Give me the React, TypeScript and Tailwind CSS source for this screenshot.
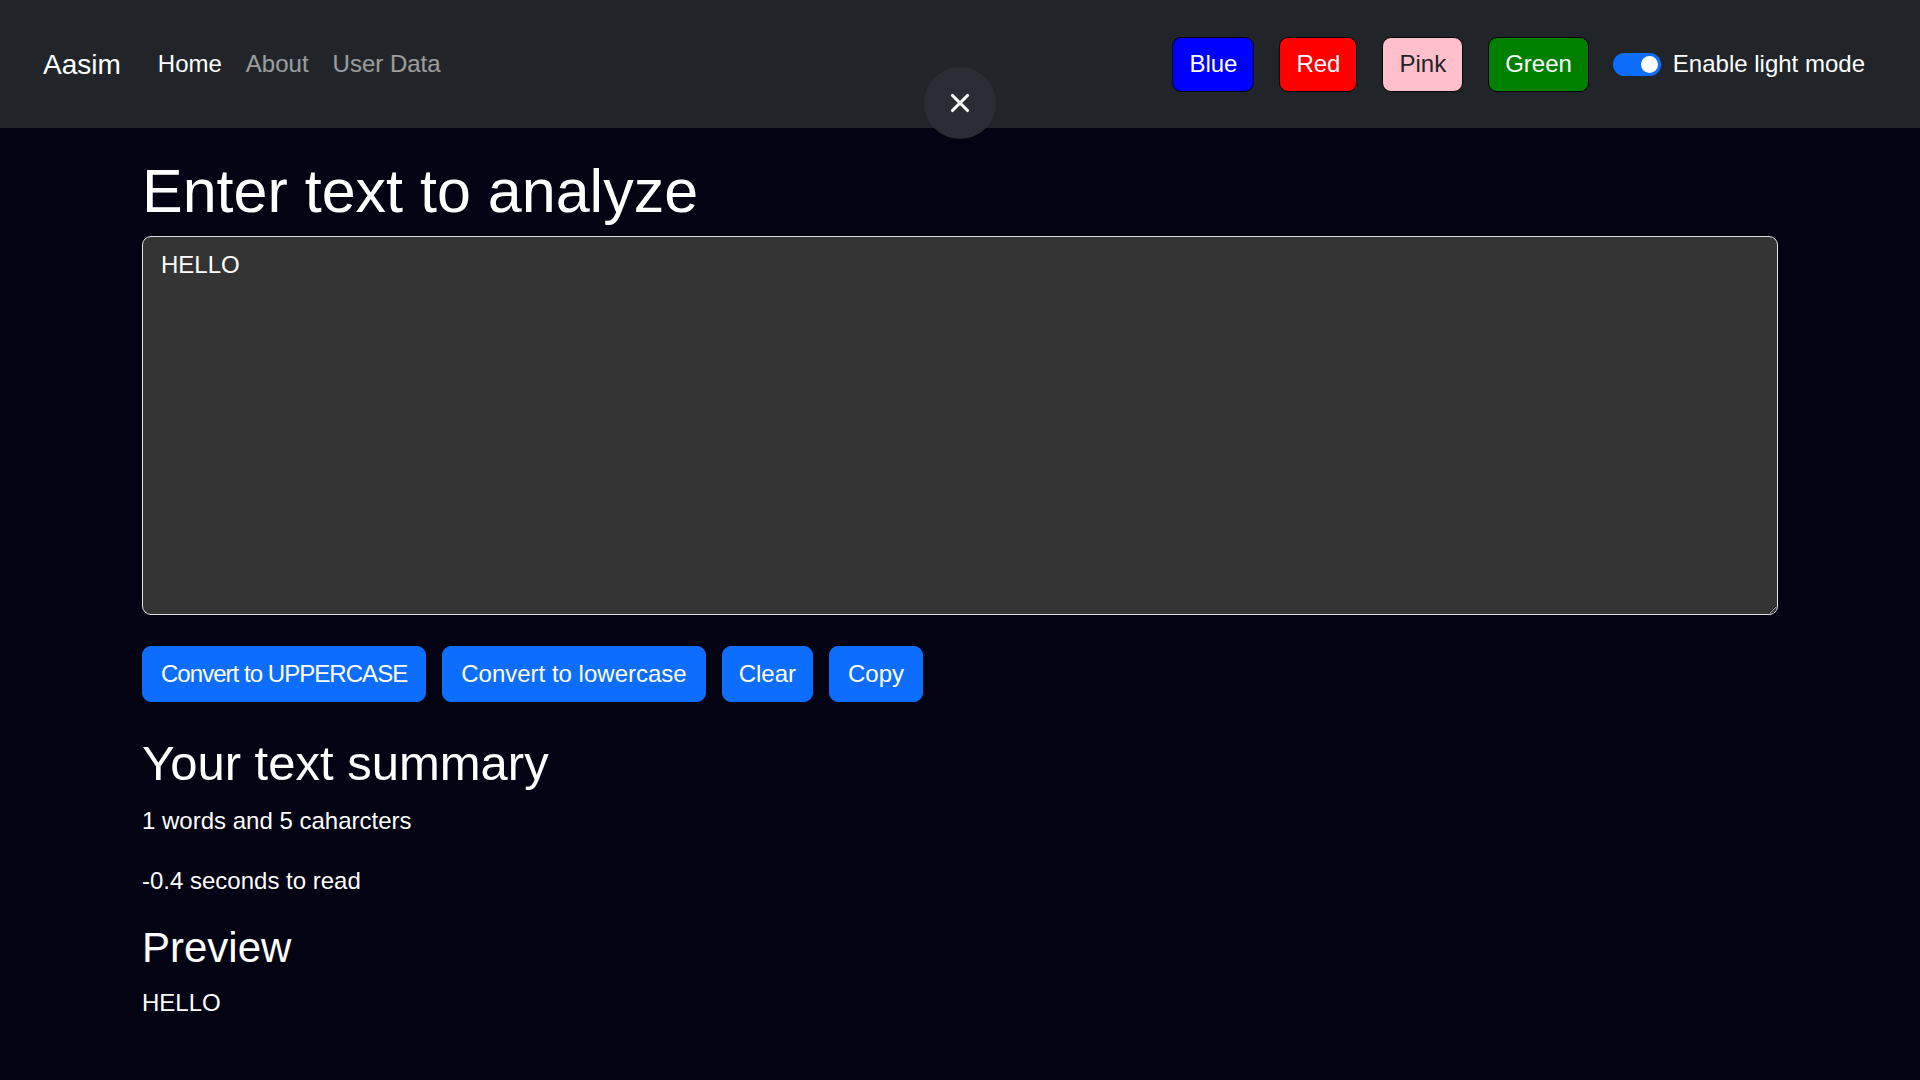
import React, { useState } from "react";
import { X } from "lucide-react";

const navButtons = [
  { label: "Blue", cls: "bg-[#0000ff] text-white" },
  { label: "Red", cls: "bg-[#ff0000] text-white" },
  { label: "Pink", cls: "bg-[#ffc0cb] text-[#212529]" },
  { label: "Green", cls: "bg-[#008000] text-white" },
];

export default function App() {
  const [text, setText] = useState("HELLO");

  const words = text.split(/\s+/).filter((w) => w.length > 0).length;

  return (
    <div className="min-h-screen bg-[#040314] font-['Liberation_Sans',Arial,sans-serif] text-white">
      {/* navbar */}
      <nav className="relative flex h-[128px] items-center justify-between bg-[#212529] pl-[43px] pr-[55px]">
        <div className="flex items-center">
          <a className="mr-[25px] text-[28px] leading-[45px] text-white">Aasim</a>
          <a className="px-[12px] text-[24px] leading-[36px] text-white">Home</a>
          <a className="px-[12px] text-[24px] leading-[36px] text-white/55">About</a>
          <a className="px-[12px] text-[24px] leading-[36px] text-white/55">User Data</a>
        </div>

        <div className="flex items-center gap-[25px]">
          {navButtons.map((b) => (
            <button
              key={b.label}
              className={`h-[55px] rounded-[9px] border border-black px-[16px] text-[24px] leading-[36px] ${b.cls}`}>
              {b.label}
            </button>
          ))}
          <label className="-ml-[1px] flex items-center gap-[12px]">
            <span className="flex h-[23px] w-[48px] items-center justify-end rounded-full bg-[#0d6efd] pr-[3px]">
              <span className="h-[17px] w-[17px] rounded-full bg-white" />
            </span>
            <span className="text-[24px] leading-[36px] text-white">Enable light mode</span>
          </label>
        </div>

        <button className="absolute left-1/2 top-[67px] flex h-[72px] w-[72px] -translate-x-1/2 items-center justify-center rounded-full bg-[#2a2d33]">
          <X className="h-[30px] w-[30px] text-white" strokeWidth={2.5} />
        </button>
      </nav>

      {/* main */}
      <div className="mx-auto w-[1636px] pt-[28px]">
        <h1 className="mb-[8px] text-[61px] leading-[1.18]">Enter text to analyze</h1>
        <textarea
          value={text}
          onChange={(e) => setText(e.target.value)}
          className="block h-[379px] w-full rounded-[9px] border border-[#dee2e6] bg-[#343434] px-[18px] pt-[10px] text-[24px] leading-[36px] text-white outline-none"
        />

        <div className="mt-[31px] flex gap-[16px]">
          <button
            onClick={() => setText(text.toUpperCase())}
            className="rounded-[9px] border border-[#0d6efd] bg-[#0d6efd] px-[18px] py-[9px] text-[24px] leading-[36px] tracking-[-0.04em] text-white">
            Convert to UPPERCASE
          </button>
          <button
            onClick={() => setText(text.toLowerCase())}
            className="rounded-[9px] border border-[#0d6efd] bg-[#0d6efd] px-[18px] py-[9px] text-[24px] leading-[36px] text-white">
            Convert to lowercase
          </button>
          <button
            onClick={() => setText("")}
            className="rounded-[9px] border border-[#0d6efd] bg-[#0d6efd] px-[16px] py-[9px] text-[24px] leading-[36px] text-white">
            Clear
          </button>
          <button
            onClick={() => navigator.clipboard?.writeText(text)}
            className="rounded-[9px] border border-[#0d6efd] bg-[#0d6efd] px-[18px] py-[9px] text-[24px] leading-[36px] text-white">
            Copy
          </button>
        </div>

        <h2 className="mt-[33px] mb-[10px] text-[49px] leading-[1.18]">Your text summary</h2>
        <p className="mb-[24px] text-[24px] leading-[36px]">
          {words} words and {text.length} caharcters
        </p>
        <p className="mb-[24px] text-[24px] leading-[36px]">-0.4 seconds to read</p>
        <h3 className="mb-[12px] text-[42px] leading-[1.2]">Preview</h3>
        <p className="text-[24px] leading-[36px]">{text}</p>
      </div>
    </div>
  );
}
